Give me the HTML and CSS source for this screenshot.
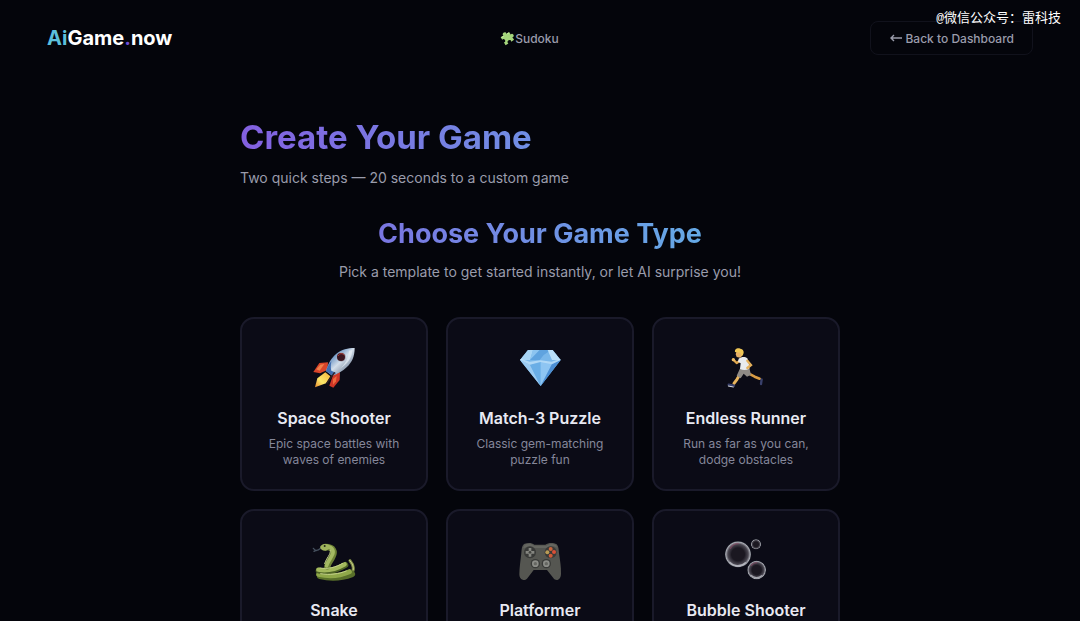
FILE: index.html
```html
<!DOCTYPE html>
<html lang="en">
<head>
    <meta charset="UTF-8">
    <meta name="viewport" content="width=device-width, initial-scale=1.0">
    <title>Create Your Game - AiGame.now</title>
    <link rel="stylesheet" href="styles.css">
</head>
<body>

    <header class="navbar">
        <a class="logo" href="#"><span class="logo-ai">Ai</span>Game<span class="logo-dot">.</span>now</a>
        <a class="nav-link" href="#">
            <svg class="puzzle" viewBox="0 0 48 48" aria-hidden="true">
                <g transform="rotate(-32 24 24)" fill="#a5d67c">
                    <path d="M9 12h10c-4-9 14-9 10 0h10v9c9-4 9 13 0 9v10H29c4-10-14-10-10 0H9V30c9 4 9-13 0-9z"/>
                    <path d="M11 14h8M31 14h6" stroke="#c6eba2" stroke-width="3"/>
                </g>
            </svg>Sudoku
        </a>
        <a class="back-button" href="#">
            <svg class="arrow" viewBox="0 0 14 10" aria-hidden="true">
                <path d="M13 5H2M5 2L2 5l3 3" fill="none" stroke="currentColor" stroke-width="1.4"/>
            </svg>
            Back to Dashboard
        </a>
    </header>
    <div class="watermark">@微信公众号：雷科技</div>

    <main class="create-page">
        <h1>Create Your Game</h1>
        <p class="subtitle">Two quick steps — 20 seconds to a custom game</p>

        <section class="game-types">
            <h2>Choose Your Game Type</h2>
            <p class="hint">Pick a template to get started instantly, or let AI surprise you!</p>

            <div class="card-grid">
                <button class="card" type="button">
                    <svg class="card-icon" viewBox="36 33 132 132" aria-hidden="true">
                        <defs>
                            <linearGradient id="hull" x1="0" y1="0" x2="1" y2="1">
                                <stop offset=".2" stop-color="#4f7fb8"/>
                                <stop offset=".5" stop-color="#d3deea"/>
                                <stop offset=".85" stop-color="#66768e"/>
                            </linearGradient>
                            <linearGradient id="flame" x1="1" y1="0" x2="0" y2="1">
                                <stop offset="0" stop-color="#f6b23a"/>
                                <stop offset=".6" stop-color="#fbe76a"/>
                                <stop offset="1" stop-color="#e8892c"/>
                            </linearGradient>
                        </defs>
                        <path fill="#d8452a" d="M84 82L58 84 40 111l20 4 22-10z"/>
                        <path fill="#f0804a" d="M49 103l12-14 12-2-14 20z"/>
                        <path fill="#cf3626" d="M99 121l21-9-1 23-19 23-12-6z"/>
                        <path fill="#ee6a3c" d="M99 132l11-9-2 16-9 10z"/>
                        <path fill="url(#flame)" d="M76 112l15 12-13 21-33 12 7-27z"/>
                        <path fill="url(#hull)" d="M164 39c0 25-8 43-24 58-12 12-27 20-43 25L78 108c7-24 17-41 31-52 16-13 34-17 55-17z"/>
                        <path fill="#3f6db0" d="M78 108c5-14 9-21 16-29-2 14-2 21 0 28l15 7-12 8z"/>
                        <path fill="#e8eff6" d="M147 47c-2 23-12 42-28 54 23-13 37-32 38-56z" opacity=".7"/>
                        <circle cx="124" cy="66" r="14" fill="#a8a9b4"/>
                        <circle cx="123" cy="66" r="12" fill="#3a1620"/>
                        <path d="M114 63c4-9 15-9 19-2" fill="none" stroke="#b03d38" stroke-width="3"/>
                        <path d="M104 112l-24 33" stroke="#33201f" stroke-width="4"/>
                    </svg>
                    <span class="card-title">Space Shooter</span>
                    <span class="card-text">Epic space battles with waves of enemies</span>
                </button>

                <button class="card" type="button">
                    <svg class="card-icon" viewBox="39 33 132 132" aria-hidden="true">
                        <path fill="#79b7ea" d="M69 45h74l24 30-60 78-62-78z"/>
                        <path fill="#a9d6f6" d="M69 45l15 0-9 30H45z"/>
                        <path fill="#8cc4f0" d="M84 45h20L75 75z"/>
                        <path fill="#5fa3df" d="M104 45l34 0-22 15-12 15-29 0z"/>
                        <path fill="#b9dff9" d="M128 45h15l24 30h-26z"/>
                        <path fill="#9bcbf2" d="M45 75l30 14 32 64z"/>
                        <path fill="#6aaee6" d="M75 89l32-10 0 74z"/>
                        <path fill="#8ec5f2" d="M107 79l34 8-34 66z"/>
                        <path fill="#4c8fd4" d="M141 87l26-12-60 78z"/>
                        <path fill="#c7e6fb" d="M45 75l30 14 32-8 34 7 26-13-3-3-24 8-33-4-33 4-26-9z" opacity=".7"/>
                    </svg>
                    <span class="card-title">Match-3 Puzzle</span>
                    <span class="card-text">Classic gem-matching puzzle fun</span>
                </button>

                <button class="card" type="button">
                    <svg class="card-icon" viewBox="42 33 132 132" aria-hidden="true">
                        <g fill="none" stroke-linecap="round" stroke-linejoin="round">
                            <path stroke="#e0a850" stroke-width="7" d="M92 76l-12 8-10-10"/>
                            <path stroke="#e8b45c" stroke-width="9" d="M92 115l-11 18-9 12"/>
                            <path stroke="#d99c44" stroke-width="8" d="M117 116l17 9 15 6"/>
                            <path stroke="#39406b" stroke-width="7" d="M56 149l16 3M155 133l-2 14"/>
                            <path stroke="#dfe2ea" stroke-width="3" d="M55 153l15 3"/>
                        </g>
                        <path fill="#8f8b86" d="M91 98l27 1 5 20-12 6-10-9-9 14-12-8z"/>
                        <path fill="#e9ebee" d="M86 71c8-6 19-7 26-1 4 10 6 20 6 31-9 5-18 5-28 1l2-17-8-5z"/>
                        <path fill="none" stroke="#e5b05a" stroke-width="7" stroke-linecap="round" d="M112 77l11 13-11 9"/>
                        <path fill="#e7b065" d="M80 48l16-3 3 14-8 9-11-2-3-8z"/>
                        <path fill="#f0c755" d="M75 51c-2-9 8-14 16-10 9 1 13 10 8 18l-4 5-4-11-12-1z"/>
                        <circle cx="70" cy="74" r="5" fill="#edbd69"/>
                    </svg>
                    <span class="card-title">Endless Runner</span>
                    <span class="card-text">Run as far as you can, dodge obstacles</span>
                </button>

                <button class="card" type="button">
                    <svg class="card-icon" viewBox="36 24 132 132" aria-hidden="true">
                        <g fill="none" stroke-linecap="round">
                            <path stroke="#7d8b45" stroke-width="9" d="M150 92c12 14 14 30 2 39"/>
                            <path stroke="#c8cf88" stroke-width="3" d="M149 91c9 10 12 18 11 28"/>
                            <path stroke="#59702a" stroke-width="19" d="M60 138c30 7 67 5 96-6"/>
                            <path stroke="#8fa849" stroke-width="15" d="M56 133c30 7 65 4 92-8"/>
                            <path stroke="#4f6525" stroke-width="18" d="M56 122c25 5 54-1 80-17"/>
                            <path stroke="#a3b95d" stroke-width="13" d="M55 119c25 5 54-2 79-16"/>
                            <path stroke="#6c8235" stroke-width="19" d="M76 51c26 0 28 15 22 27-5 13-14 20-16 31"/>
                            <path stroke="#a4b962" stroke-width="11" d="M78 50c21 1 25 14 18 26-6 13-13 18-16 31"/>
                            <path stroke="#c4d18a" stroke-width="3" d="M91 61c2 13-12 22-17 40M60 114c25 4 47-2 68-14M62 131c28 5 54 1 77-8"/>
                            <path stroke="#46515f" stroke-width="4" d="M62 55c-10 8-15 9-22 0M48 61l-6 3"/>
                        </g>
                        <path fill="#9fb45c" d="M60 51c4-9 17-12 27-6l4 9-13 8c-10 1-16-3-18-11z"/>
                        <circle cx="74" cy="48" r="3" fill="#232a16"/>
                    </svg>
                    <span class="card-title">Snake</span>
                    <span class="card-text">Eat, grow and avoid your own tail</span>
                </button>

                <button class="card" type="button">
                    <svg class="card-icon" viewBox="39 24 132 132" aria-hidden="true">
                        <path fill="#555651" d="M57 42c12-5 24-4 31 2h33c9-6 23-7 34-1 6 6 6 16 7 27 3 21 7 43 6 61 0 18-15 25-23 13l-19-24H86l-20 26c-8 9-23 3-23-13 0-20 4-43 6-64 1-11 1-21 8-27z"/>
                        <path fill="#70716b" d="M59 44c10-4 20-3 28 3h37c8-6 19-7 29-2l4 8c-15-7-23-4-31 1H86c-9-5-18-6-32 1z" opacity=".6"/>
                        <g fill="#393a38">
                            <circle cx="75" cy="67" r="18"/>
                            <circle cx="137" cy="67" r="18"/>
                            <circle cx="91" cy="101" r="14"/>
                            <circle cx="124" cy="101" r="14"/>
                        </g>
                        <path stroke="#858680" stroke-width="8" d="M75 54v26M62 67h26"/>
                        <circle cx="75" cy="67" r="4" fill="#42433f"/>
                        <circle cx="137" cy="57" r="6" fill="#c8643c"/>
                        <circle cx="127" cy="67" r="6" fill="#b99b56"/>
                        <circle cx="147" cy="66" r="6" fill="#d94f37"/>
                        <circle cx="137" cy="77" r="6" fill="#cf5b38"/>
                        <circle cx="91" cy="101" r="10" fill="#8b8c87"/>
                        <circle cx="124" cy="101" r="10" fill="#8b8c87"/>
                        <circle cx="91" cy="101" r="5" fill="#666762"/>
                        <circle cx="124" cy="101" r="5" fill="#666762"/>
                    </svg>
                    <span class="card-title">Platformer</span>
                    <span class="card-text">Jump and run through tricky levels</span>
                </button>

                <button class="card" type="button">
                    <svg class="card-icon" viewBox="42 24 132 132" aria-hidden="true">
                        <defs>
                            <radialGradient id="bubble">
                                <stop offset=".5" stop-color="#1b1821"/>
                                <stop offset=".78" stop-color="#4a4751"/>
                                <stop offset=".94" stop-color="#a9abb3"/>
                                <stop offset="1" stop-color="#5c6068"/>
                            </radialGradient>
                        </defs>
                        <circle cx="84" cy="73" r="39" fill="url(#bubble)"/>
                        <circle cx="138" cy="43" r="15" fill="url(#bubble)"/>
                        <circle cx="140" cy="120" r="28" fill="url(#bubble)"/>
                        <g fill="none" stroke-linecap="round" stroke-width="4">
                            <path stroke="#8f4965" d="M61 55c5-9 14-14 24-14M124 106c4-5 10-8 16-8" opacity=".6"/>
                            <path stroke="#d5d9df" d="M60 97c12 13 34 13 46 1M123 136c9 9 23 9 32 1" opacity=".6"/>
                        </g>
                    </svg>
                    <span class="card-title">Bubble Shooter</span>
                    <span class="card-text">Aim, match and pop the bubbles</span>
                </button>
            </div>
        </section>
    </main>

</body>
</html>
```
FILE: styles.css
```css
* {
    box-sizing: border-box;
}
body {
    font-family: Inter, "Liberation Sans", sans-serif;
    background-color: #04050b;
    color: #9a9cab;
    margin: 0;
    height: 100vh;
    overflow: hidden;
}
a {
    color: inherit;
    text-decoration: none;
}
.navbar {
    display: grid;
    grid-template-columns: 1fr auto 1fr;
    align-items: center;
    height: 76px;
    padding: 0 47px;
}
.logo {
    font-size: 20px;
    font-weight: 700;
    color: #fff;
}
.logo-ai {
    color: #5cc0dc;
}
.logo-dot {
    color: #6d4fd8;
}
.nav-link {
    display: flex;
    align-items: center;
    padding-right: 22px;
    font-size: 12px;
    font-weight: 500;
}
.puzzle {
    width: 16px;
    height: 16px;
}
.back-button {
    justify-self: end;
    display: flex;
    align-items: center;
    gap: 2px;
    height: 34px;
    padding: 0 18px;
    border: 1px solid #11121c;
    border-radius: 8px;
    font-size: 12px;
    font-weight: 500;
}
.arrow {
    width: 14px;
    height: 10px;
}
.watermark {
    position: absolute;
    top: 10px;
    right: 19px;
    font-family: "Liberation Mono", "Noto Sans CJK SC", monospace;
    font-size: 13px;
    line-height: 18px;
    color: #fff;
}
.create-page {
    max-width: 600px;
    margin: 0 auto;
    padding-top: 38px;
}
h1,
h2 {
    margin: 0;
    background: linear-gradient(90deg, #8360e0, #5cc0e8);
    -webkit-background-clip: text;
    background-clip: text;
    color: transparent;
}
h1 {
    font-size: 33px;
    font-weight: 700;
    line-height: 46px;
}
h2 {
    font-size: 27px;
    font-weight: 700;
    line-height: 36px;
}
.subtitle,
.hint {
    margin: 0;
    font-size: 14px;
    line-height: 20px;
}
.subtitle {
    margin-top: 8px;
}
.game-types {
    margin-top: 28px;
    text-align: center;
}
.hint {
    margin-top: 10px;
}
.card-grid {
    display: grid;
    grid-template-columns: repeat(3, 1fr);
    gap: 18px;
    margin-top: 35px;
}
.card {
    display: flex;
    flex-direction: column;
    align-items: center;
    padding: 27px 20px 21px;
    background-color: #0b0b16;
    border: 2px solid #1a1a2a;
    border-radius: 14px;
    font-family: inherit;
    color: inherit;
    cursor: pointer;
}
.card:hover {
    border-color: #6d4fd8;
}
.card-icon {
    width: 44px;
    height: 44px;
}
.card-title {
    margin-top: 19px;
    font-size: 16px;
    font-weight: 600;
    line-height: 18px;
    color: #e8e9f2;
}
.card-text {
    margin-top: 9px;
    font-size: 12px;
    line-height: 16px;
    color: #85879a;
}
```
